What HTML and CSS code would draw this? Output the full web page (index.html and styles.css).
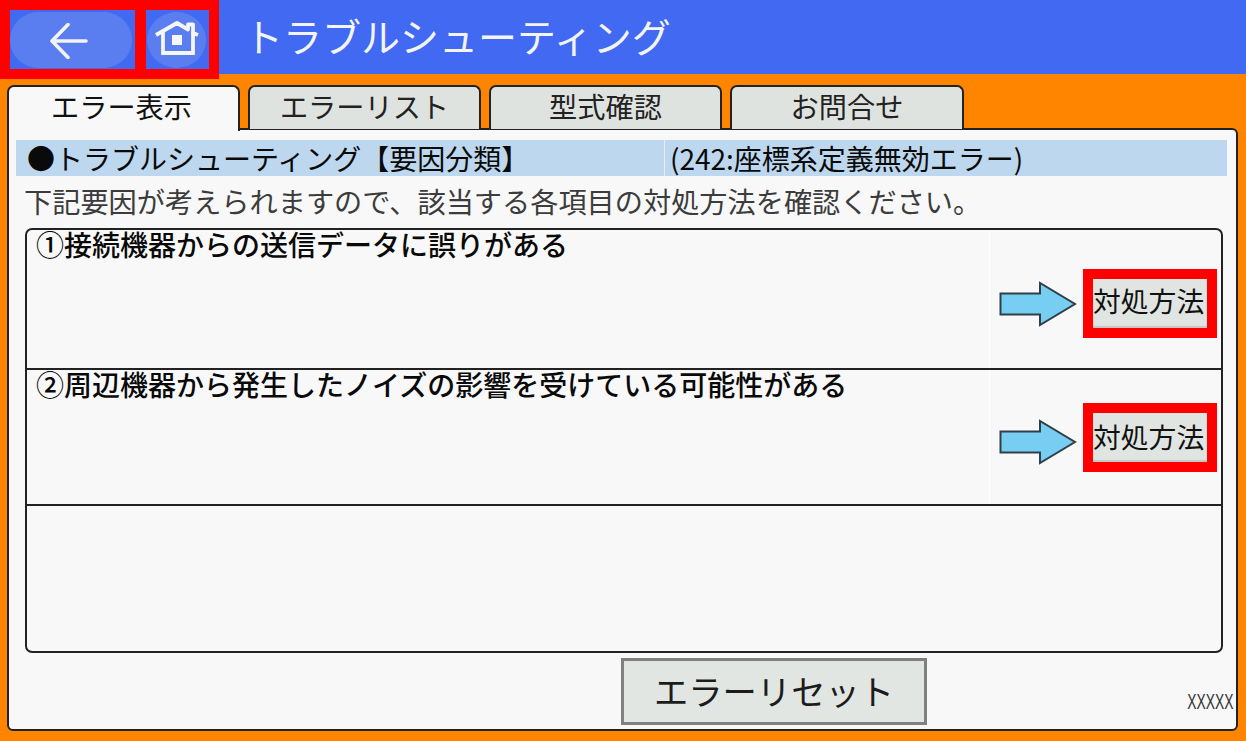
FILE: index.html
```html
<!DOCTYPE html>
<html lang="ja">
<head>
<meta charset="utf-8">
<title>トラブルシューティング</title>
<link rel="stylesheet" href="styles.css">
</head>
<body>
<div class="screen">
  <header class="header">
    <div class="nav">
      <button class="nav-slot nav-back" aria-label="戻る">
        <span class="pill">
          <svg class="icon-back" viewBox="0 0 40 36" width="40" height="36"><path d="M37 18H4M19 1.500 3 18l16 16.500" fill="none" stroke="#f2f4f4" stroke-width="3.600" stroke-linecap="round" stroke-linejoin="round"/></svg>
        </span>
      </button>
      <button class="nav-slot nav-home" aria-label="ホーム">
        <span class="disc">
          <svg viewBox="0 0 46 40" width="46" height="40"><path d="M2 15 23 3l11 6.500V4.500h5V13l5 2" fill="none" stroke="#f5f6f6" stroke-width="3.800" stroke-linejoin="round"/><path d="M9 12v21h30V12" fill="none" stroke="#f5f6f6" stroke-width="3.800"/><rect x="18" y="15" width="10" height="10" fill="#f5f6f6"/></svg>
        </span>
      </button>
    </div>
    <h1 class="title">トラブルシューティング</h1>
  </header>

  <nav class="tabs">
    <div class="tab tab-active">エラー表示</div>
    <div class="tab">エラーリスト</div>
    <div class="tab">型式確認</div>
    <div class="tab">お問合せ</div>
  </nav>

  <main class="panel">
    <div class="section-bar">
      <div class="section-name">●トラブルシューティング【要因分類】</div>
      <div class="section-code">(242:座標系定義無効エラー)</div>
    </div>
    <p class="lead">下記要因が考えられますので、該当する各項目の対処方法を確認ください。</p>

    <div class="causes">
      <div class="cause cause-one">
        <div class="cause-text">①接続機器からの送信データに誤りがある</div>
        <div class="cause-action">
          <svg class="arrow" viewBox="0 0 78 46" width="78" height="46"><path d="M1.500 12.500H41V2l35 21-35 21V33.500H1.500z" fill="#78cdf2" stroke="#2f3f48" stroke-width="2"/></svg>
          <div class="action-frame"><button class="action-btn">対処方法</button></div>
        </div>
      </div>
      <div class="cause cause-two">
        <div class="cause-text">②周辺機器から発生したノイズの影響を受けている可能性がある</div>
        <div class="cause-action">
          <svg class="arrow" viewBox="0 0 78 46" width="78" height="46"><path d="M1.500 12.500H41V2l35 21-35 21V33.500H1.500z" fill="#78cdf2" stroke="#2f3f48" stroke-width="2"/></svg>
          <div class="action-frame"><button class="action-btn">対処方法</button></div>
        </div>
      </div>
      <div class="cause cause-empty"></div>
    </div>

    <div class="footer">
      <button class="reset">エラーリセット</button>
      <span class="version">XXXXX</span>
    </div>
  </main>
</div>
</body>
</html>
```
FILE: styles.css
```css
* { box-sizing: border-box; }
html, body { margin: 0; padding: 0; }
body { width: 1246px; height: 741px; overflow: hidden; background: #ff8400; font-family: "Noto Sans CJK JP", "Noto Sans", sans-serif; color: #111; }
button { font-family: inherit; margin: 0; padding: 0; border: 0; }
.screen { display: flex; flex-direction: column; height: 741px; }

.header { display: flex; height: 74px; background: #4169f1; flex: none; align-items: flex-start; }
.nav { display: flex; gap: 11px; width: 219px; height: 79px; padding: 10px; background: #ff0000; flex: none; position: relative; z-index: 2; }
.nav-slot { display: block; height: 59px; background: #4169f1; flex: none; }
.nav-back { width: 125px; }
.nav-home { width: 63px; }
.pill { display: flex; align-items: center; justify-content: center; width: 122px; height: 56px; border-radius: 28px; background: #5a7ef0; }
.icon-back { margin-right: 4px; margin-top: 2px; }
.disc { display: flex; align-items: center; justify-content: center; width: 59px; height: 56px; margin-left: 1px; border-radius: 50%; background: #5a7ef0; }
.title { margin: 0 0 0 25px; font-size: 39px; line-height: 70px; font-weight: 400; color: #f2f4f6; white-space: nowrap; }

.tabs { display: flex; gap: 8px; margin: 11px 0 0 7px; height: 44px; position: relative; z-index: 1; flex: none; }
.tab { width: 233px; height: 44px; border: 2px solid #222; border-bottom: 0; border-radius: 7px 7px 0 0; background: #dfe3e0; text-align: center; font-size: 28.200px; line-height: 38px; color: #222; }
.tab:last-child { width: 234px; }
.tab-active { background: #f8f8f8; height: 46px; padding-right: 4px; color: #111; }

.panel { width: 1231px; height: 603px; margin: -1px 0 0 7px; padding: 10px 9px 0 7px; border: 2px solid #222; border-radius: 0 6px 6px 6px; background: #f8f8f8; flex: none; display: flex; flex-direction: column; }

.section-bar { display: flex; height: 36px; width: 1211px; background: #bdd7ee; flex: none; font-size: 28px; line-height: 36px; color: #0a0a0a; }
.section-name { width: 649px; padding-left: 11px; border-right: 1px solid #e6eef6; white-space: nowrap; }
.section-code { padding-left: 5px; white-space: nowrap; }

.lead { margin: 0 0 0 8px; height: 52px; font-size: 28.200px; line-height: 50px; color: #3c3c3c; white-space: nowrap; flex: none; }

.causes { width: 1198px; height: 425px; margin-left: 9px; border: 2px solid #222; border-radius: 7px; display: flex; flex-direction: column; flex: none; }
.cause { display: flex; flex: none; border-bottom: 2px solid #222; }
.cause-one { height: 140px; }
.cause-two { height: 136px; }
.cause-empty { flex: 1; border-bottom: 0; }
.cause-text { width: 963px; padding: 0 0 0 9px; font-size: 28px; line-height: 28px; border-right: 1px solid #fff; white-space: nowrap; color: #0a0a0a; font-weight: 500; }
.cause-action { flex: 1; display: flex; align-items: flex-start; padding-left: 9px; }
.cause-one .cause-action { padding-top: 39px; }
.cause-two .cause-action { padding-top: 33px; }
.arrow { flex: none; margin: 12px 6px 0 0; }
.cause-two .arrow { margin-top: 16px; }
.action-frame { width: 134px; height: 69px; padding: 10px; background: #ff0000; flex: none; }
.action-btn { display: block; width: 114px; height: 49px; padding: 0 3px 8px 0; background: #e1e5e2; font-size: 27.800px; line-height: 38px; color: #111; text-align: center; white-space: nowrap; box-shadow: inset 0 -2px 1px #c4c8c5; }
.cause-two .action-btn { padding-bottom: 3px; }

.footer { display: flex; align-items: flex-start; padding-top: 5px; flex: 1; }
.reset { width: 306px; height: 67px; margin-left: 605px; padding-bottom: 4px; border: 3px solid #808080; background: #e2e6e3; font-size: 34.300px; line-height: 54px; color: #1c1c1c; text-align: center; }
.version { margin: 32px 0 0 auto; position: relative; left: 6px; font-family: "Liberation Sans", sans-serif; font-size: 22px; line-height: 24px; color: #333; white-space: nowrap; transform: scaleX(.63); transform-origin: right center; }
```
